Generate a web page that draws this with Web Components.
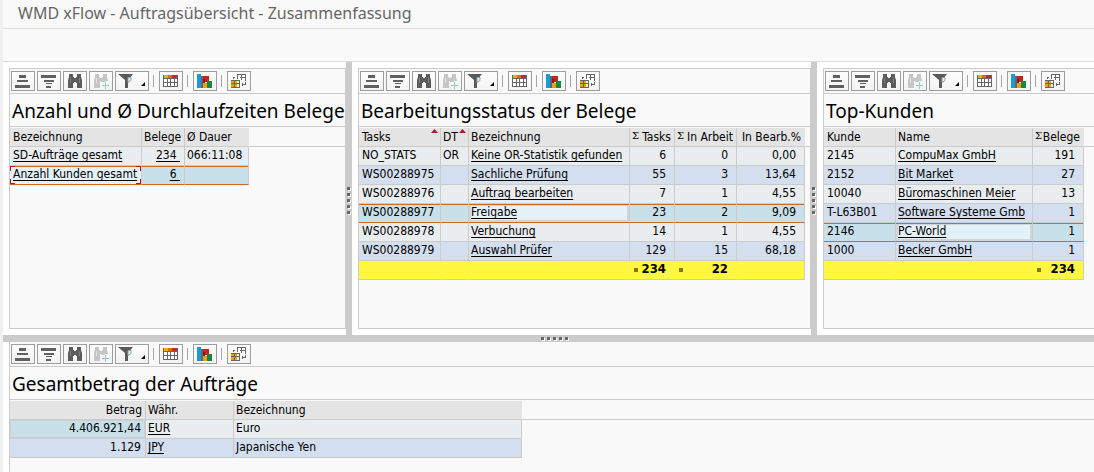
<!DOCTYPE html>
<html lang="de">
<head>
<meta charset="utf-8">
<meta name="viewport" content="width=device-width, initial-scale=1">
<title>WMD xFlow - Auftragsübersicht - Zusammenfassung</title>
<style>
  html, body { height: 100%; margin: 0; }
  body {
    --line: #cbcbcb;
    --surface: #f9f9f9;
    --heading-font: "Noto Sans", "DejaVu Sans Condensed", sans-serif;
    font: 12px/18px "DejaVu Sans Condensed", "DejaVu Sans", sans-serif;
    color: #000;
    background: #fff;
  }
</style>
</head>
<body>
<xflow-app></xflow-app>

<template id="app-template">
  <style>
    :host {
      display: grid; box-sizing: border-box; min-height: 100%; height: 100vh;
      grid-template-rows: 29px 33px minmax(0, 273fr) 7px minmax(0, 130fr);
      grid-template-columns: minmax(0, 1fr);
      border-left: 3px solid #f0f0f0; background: #fff; overflow: hidden;
    }
    header, .bar { background: var(--surface); border-bottom: 1px solid #dcdcdc; }
    h1 { margin: 0; padding-left: 15px; font: 400 16px/27px var(--heading-font); color: #666; white-space: nowrap; }
    main { display: contents; }
    .top {
      display: grid;
      grid-template-columns: minmax(0, 343fr) 6px minmax(0, 459fr) 6px minmax(0, 277fr);
    }
    .pane { padding: 6px 0 6px 6px; display: grid; }
    .bottom { padding-left: 6px; display: grid; }
    .open { --panel-right: 0; }
    .flat { --panel-top: 0; --panel-bottom: 0; --panel-right: 0; }
  </style>
  <header><h1>WMD xFlow - Auftragsübersicht - Zusammenfassung</h1></header>
  <div class="bar"></div>
  <main>
    <div class="top">
      <section class="pane"><alv-panel><span slot="heading">Anzahl und Ø Durchlaufzeiten Belege</span><alv-grid source="durchlauf"></alv-grid></alv-panel></section>
      <pane-splitter></pane-splitter>
      <section class="pane"><alv-panel><span slot="heading">Bearbeitungsstatus der Belege</span><alv-grid source="status"></alv-grid></alv-panel></section>
      <pane-splitter></pane-splitter>
      <section class="pane open"><alv-panel><span slot="heading">Top-Kunden</span><alv-grid source="kunden"></alv-grid></alv-panel></section>
    </div>
    <pane-splitter horizontal></pane-splitter>
    <section class="bottom flat"><alv-panel><span slot="heading">Gesamtbetrag der Aufträge</span><alv-grid source="betrag"></alv-grid></alv-panel></section>
  </main>
</template>

<template id="panel-template">
  <style>
    :host {
      display: block; min-width: 0; overflow: hidden; background: var(--surface);
      border: 0 solid var(--line);
      border-width: var(--panel-top, 1px) var(--panel-right, 1px) var(--panel-bottom, 1px) 1px;
    }
    h2 {
      margin: 0 0 1px; padding-left: 2px; height: 32px; overflow: hidden;
      font: 400 19px/34px var(--heading-font); white-space: nowrap; border-bottom: 1px solid var(--line);
    }
  </style>
  <alv-toolbar></alv-toolbar>
  <h2><slot name="heading"></slot></h2>
  <slot></slot>
</template>

<template id="toolbar-template">
  <style>
    :host { display: flex; gap: 2px; padding: 2px 1px; border-bottom: 1px solid var(--line); }
    button {
      flex: none; width: 24px; height: 20px; padding: 0; border: 1px solid #9d9d9d;
      background: linear-gradient(#fdfdfd, #f3f3f3); display: flex;
    }
    button.wide { width: 34px; }
    svg { display: block; height: 18px; width: 100%; }
    i { flex: none; width: 1px; height: 12px; margin: 4px 3px 0 2px; background: #a6a6a6; }
  </style>
  <button type="button" aria-label="Aufsteigend sortieren"><svg viewBox="0 0 22 18" shape-rendering="crispEdges"><path fill="#606060" d="M7 3h7v3H7zM5 8h11v2H5zM3 13h15v3H3z"/></svg></button>
  <button type="button" aria-label="Absteigend sortieren"><svg viewBox="0 0 22 18" shape-rendering="crispEdges"><path fill="#606060" d="M3 3h15v3H3zM6 8h10v2H6zM8 11h6v1H8zM8 14h5v2H8z"/></svg></button>
  <button type="button" aria-label="Suchen"><svg viewBox="0 0 22 18"><path fill="#5c5c5c" d="M5 2h4v3h1v1h2V5h1V2h4v3l1 3v8h-5v-5h-1v-1h-2v1H9v5H4V8l1-3z"/><path stroke="#7e7e7e" d="M6.500 6v5M15.500 6v5"/></svg></button>
  <button type="button" aria-label="Weitersuchen" disabled><svg viewBox="0 0 22 18"><path fill="#c6c6c6" d="M5 2h4v3h1v1h2V5h1V2h4v3l1 3v1h-3v1h-4v-1h-1v7H4V8l1-3z"/><path stroke="#e2e2e2" d="M6.500 6v5"/><path stroke="#8dcbe8" fill="none" d="M12 13.500h7M15.500 10v7"/></svg></button>
  <button type="button" class="wide" aria-label="Filter setzen"><svg viewBox="0 0 32 18"><path fill="#5a5a5a" d="M2 2h15l-5 6v8H9V8z"/><path fill="#e6f1f6" stroke="#8aa2b0" d="M12 5.500h3v3l-3 2z"/><path d="M29 10v4h-4z"/></svg></button>
  <i></i>
  <button type="button" aria-label="Layout auswählen"><svg viewBox="0 0 22 18" shape-rendering="crispEdges"><path fill="#fff" d="M3 3h15v12H3z"/><path fill="#eeb000" d="M4 3h4v4H4z"/><path fill="#e06a10" d="M8 3h4v4H8z"/><path fill="#c9282d" d="M12 3h5v4h-5z"/><path fill="none" stroke="#666" d="M3.500 3v11.500h14V3M3 6.500h15M3 10.500h15M7.500 6v9M10.500 6v9M14.500 6v9"/></svg></button>
  <i></i>
  <button type="button" aria-label="Grafik anzeigen"><svg viewBox="0 0 22 18" shape-rendering="crispEdges"><path fill="#189bd8" d="M3 2h4v14H3z"/><path fill="#62676b" d="M7 4h2v12H7z"/><path fill="#ca2020" d="M9 4h6v6H9z"/><path fill="#8c1616" d="M9 7h2v4H9z"/><path fill="#eda100" d="M9 11h4v5H9z"/><path fill="#138843" d="M13 9h5v7h-5z"/></svg></button>
  <i></i>
  <button type="button" aria-label="Sichten wechseln"><svg viewBox="0 0 22 18" shape-rendering="crispEdges"><path fill="#eda100" d="M3 9h6v7H3z"/><path fill="#fff" d="M9 3h9v5H9z"/><path fill="none" stroke="#666" d="M9.500 7V2.500h8v6M12 5.500h6M13.500 2v6M3 8.500h8v7H3M6.500 9v7M3 11.500h8M14 12.500h3.500v-3M14 11v3M5 5.500h2M5.500 5v2"/></svg></button>
</template>

<template id="splitter-template">
  <style>
    :host { display: flex; align-items: center; padding-top: 4px; background: var(--line); }
    :host([horizontal]) { justify-content: center; padding: 0 0 0 12px; }
    svg { display: block; width: 6px; height: 28px; }
    .h { display: none; width: 28px; height: 6px; }
    :host([horizontal]) .h { display: block; }
    :host([horizontal]) .v { display: none; }
  </style>
  <svg class="v" viewBox="0 0 6 28" shape-rendering="crispEdges"><path fill="#fff" d="M2 1h3v3H2zM2 7h3v3H2zM2 13h3v3H2zM2 19h3v3H2zM2 25h3v3H2z"/><path fill="#666" d="M1 0h3v3H1zM1 6h3v3H1zM1 12h3v3H1zM1 18h3v3H1zM1 24h3v3H1z"/></svg>
  <svg class="h" viewBox="0 0 28 6" shape-rendering="crispEdges"><path fill="#fff" d="M1 2h3v3H1zM7 2h3v3H7zM13 2h3v3h-3zM19 2h3v3h-3zM25 2h3v3h-3z"/><path fill="#666" d="M0 1h3v3H0zM6 1h3v3H6zM12 1h3v3h-3zM18 1h3v3h-3zM24 1h3v3h-3z"/></svg>
</template>

<template id="grid-template">
  <style>
    :host { display: block; position: relative; }
    .rule { position: absolute; left: 0; right: 0; top: 18px; height: 1px; background: var(--line); }
    table { position: relative; table-layout: fixed; width: 0; border-spacing: 0; }
    th, td {
      box-sizing: border-box; height: 19px; padding: 0 3px 0 2px; overflow: hidden;
      line-height: 18px; font-weight: 400; text-align: left; white-space: nowrap;
      border: 0 solid var(--line); border-width: 0 1px 1px 0;
    }
    th { position: relative; background: #e4e4e4; }
    th:first-child, td:first-child { padding-left: 3px; }
    th:last-child { border-right-color: #e4e4e4; }
    td { background: #e9edef; line-height: 16px; padding-bottom: 2px; }
    .alt td { background: #d3deee; }
    .r { text-align: right; }
    td.r { padding-right: 8px; }
    .tight td.r { padding-right: 4px; }
    .sel td { background: #c8e0ea; border-bottom-color: #d2691e; box-shadow: inset 0 1px #d2691e; }
    .sel td.focus { background: #e4f1f9; box-shadow: inset 0 1px #d2691e, inset 0 0 0 2px #cfd6da; }
    .tight td.mark { background: #c8e0ea; box-shadow: inset 0 0 0 1px #cfcfcf; }
    .sel td.corners {
      box-shadow: none;
      background:
        linear-gradient(#d0021b, #d0021b) 0 0 / 5px 1px,
        linear-gradient(#d0021b, #d0021b) 0 0 / 1px 5px,
        linear-gradient(#d0021b, #d0021b) 100% 0 / 5px 1px,
        linear-gradient(#d0021b, #d0021b) 100% 0 / 1px 5px,
        linear-gradient(#d0021b, #d0021b) 0 100% / 5px 1px,
        linear-gradient(#d0021b, #d0021b) 0 100% / 1px 5px,
        linear-gradient(#d0021b, #d0021b) 100% 100% / 5px 1px,
        linear-gradient(#d0021b, #d0021b) 100% 100% / 1px 5px,
        linear-gradient(#d2691e, #d2691e) 0 0 / 100% 1px,
        #e4f1f9;
      background-repeat: no-repeat;
    }
    .total td { background: #fff740; border-right-color: #fff740; font-weight: 700; font-size: 13px; }
    .total td:last-child { border-right-color: var(--line); }
    .total b { float: left; width: 4px; height: 4px; margin: 7px 0 0 2px; background: #857a00; }
    .sigma { float: left; font: 10px/16px "DejaVu Serif", serif; }
    .up { position: absolute; top: 1px; right: 2px; width: 7px; height: 4px; background: #c8102e; clip-path: polygon(50% 0, 100% 100%, 0 100%); }
    a { color: inherit; text-decoration: underline 1px; text-underline-offset: 2px; text-decoration-skip-ink: none; }
  </style>
  <div class="rule"></div>
  <table><colgroup></colgroup><thead><tr></tr></thead><tbody></tbody></table>
</template>

<script>
  const GRIDS = {
    durchlauf: {
      cols: [[132, 'Bezeichnung', 'link'], [43, 'Belege', 'link r'], [64, 'Ø Dauer']],
      tight: true,
      rows: [
        ['', 'SD-Aufträge gesamt', '234\u00a0', '066:11:08'],
        ['sel corners:0', 'Anzahl Kunden gesamt', '6\u00a0', '']
      ]
    },
    status: {
      cols: [[82, 'Tasks', 'up'], [28, 'DT', 'up'], [161, 'Bezeichnung', 'link'], [45, 'Tasks', 'r sum'], [62, 'In Arbeit', 'r sum'], [68, 'In Bearb.%', 'r']],
      rows: [
        ['', 'NO_STATS', 'OR', 'Keine OR-Statistik gefunden', '6', '0', '0,00'],
        ['alt', 'WS00288975', '', 'Sachliche Prüfung', '55', '3', '13,64'],
        ['', 'WS00288976', '', 'Auftrag bearbeiten', '7', '1', '4,55'],
        ['sel focus:2', 'WS00288977', '', 'Freigabe', '23', '2', '9,09'],
        ['', 'WS00288978', '', 'Verbuchung', '14', '1', '4,55'],
        ['alt', 'WS00288979', '', 'Auswahl Prüfer', '129', '15', '68,18'],
        ['total', '', '', '', '234', '22', '']
      ]
    },
    kunden: {
      cols: [[72, 'Kunde'], [137, 'Name', 'link'], [51, 'Belege', 'r sum']],
      rows: [
        ['', '2145', 'CompuMax GmbH', '191'],
        ['alt', '2152', 'Bit Market', '27'],
        ['', '10040', 'Büromaschinen Meier', '13'],
        ['alt', 'T-L63B01', 'Software Systeme Gmb', '1'],
        ['sel focus:1', '2146', 'PC-World', '1'],
        ['alt', '1000', 'Becker GmbH', '1'],
        ['total', '', '', '234']
      ]
    },
    betrag: {
      cols: [[136, 'Betrag', 'r'], [88, 'Währ.', 'link'], [288, 'Bezeichnung']],
      tight: true,
      rows: [
        ['mark:0', '4.406.921,44', 'EUR', 'Euro'],
        ['alt', '1.129', 'JPY', 'Japanische Yen']
      ]
    }
  };

  class TemplateElement extends HTMLElement {
    constructor() {
      super();
      const template = document.getElementById(this.constructor.template);
      this.attachShadow({ mode: 'open' }).append(template.content.cloneNode(true));
    }
  }

  class PaneSplitter extends TemplateElement { static template = 'splitter-template'; }
  class AlvToolbar extends TemplateElement { static template = 'toolbar-template'; }
  class AlvPanel extends TemplateElement { static template = 'panel-template'; }
  class XflowApp extends TemplateElement { static template = 'app-template'; }

  class AlvGrid extends TemplateElement {
    static template = 'grid-template';

    connectedCallback() {
      const { cols, rows, tight } = GRIDS[this.getAttribute('source')];
      const table = this.shadowRoot.querySelector('table');
      table.classList.toggle('tight', Boolean(tight));
      const has = (i, flag) => (cols[i][2] || '').split(' ').includes(flag);

      cols.forEach(([width, label], i) => {
        const col = document.createElement('col');
        col.style.width = width + 'px';
        table.querySelector('colgroup').append(col);
        const th = document.createElement('th');
        th.scope = 'col';
        if (has(i, 'r')) th.className = 'r';
        if (has(i, 'sum')) th.innerHTML = '<span class="sigma">Σ</span>';
        th.append(label);
        if (has(i, 'up')) th.insertAdjacentHTML('beforeend', '<span class="up"></span>');
        table.querySelector('thead tr').append(th);
      });

      for (const [spec, ...cells] of rows) {
        const tr = table.querySelector('tbody').insertRow();
        const marks = {};
        for (const part of spec.split(' ').filter(Boolean)) {
          const [name, index] = part.split(':');
          if (index === undefined) tr.className = name; else marks[index] = name;
        }
        cells.forEach((text, i) => {
          const td = tr.insertCell();
          if (has(i, 'r')) td.classList.add('r');
          if (marks[i]) td.classList.add(marks[i]);
          if (tr.className === 'total' && text) td.append(document.createElement('b'));
          if (has(i, 'link') && text) {
            const a = document.createElement('a');
            a.href = '#';
            a.textContent = text;
            td.append(a);
          } else td.append(text);
        });
      }
    }
  }

  customElements.define('pane-splitter', PaneSplitter);
  customElements.define('alv-toolbar', AlvToolbar);
  customElements.define('alv-grid', AlvGrid);
  customElements.define('alv-panel', AlvPanel);
  customElements.define('xflow-app', XflowApp);
</script>
</body>
</html>
